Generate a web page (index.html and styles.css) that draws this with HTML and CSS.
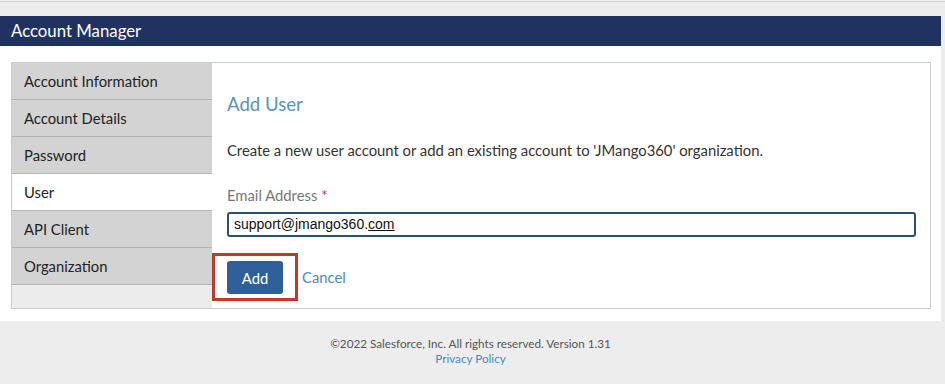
FILE: index.html
```html
<!DOCTYPE html>
<html lang="en">
<head>
    <meta charset="UTF-8">
    <title>Account Manager</title>
    <link rel="stylesheet" href="styles.css">
</head>
<body>
    <div class="top-line"></div>

    <div class="wrap">
        <div class="header">Account Manager</div>

        <div class="panel">
            <div class="box">
                <ul class="tabs">
                    <li>Account Information</li>
                    <li>Account Details</li>
                    <li>Password</li>
                    <li class="active">User</li>
                    <li>API Client</li>
                    <li>Organization</li>
                    <li class="filler"></li>
                </ul>

                <div class="content">
                    <h2>Add User</h2>
                    <p class="desc">Create a new user account or add an existing account to 'JMango360' organization.</p>

                    <label class="label">Email Address <span class="req">*</span></label>
                    <div class="field">support@jmango360.<span class="spell">com</span></div>

                    <div class="actions">
                        <span class="highlight">
                            <button class="btn">Add</button>
                        </span>
                        <a class="link" href="#">Cancel</a>
                    </div>
                </div>
            </div>
        </div>

        <div class="footer">
            <div>&copy;2022 Salesforce, Inc. All rights reserved. Version 1.31</div>
            <a class="link" href="#">Privacy Policy</a>
        </div>
    </div>
</body>
</html>
```

FILE: styles.css
```css
body {
    margin: 0;
    background-color: #ededed;
    font-family: Lato, "Open Sans", sans-serif;
    color: #222;
}

.top-line {
    height: 1px;
    border-bottom: 1px solid #cfcfcf;
    background-color: #f2f2f2;
}

.wrap {
    width: 941px;
    margin-top: 14px;
}

.header {
    height: 30px;
    line-height: 30px;
    background-color: #1f3260;
    color: #fff;
    font-size: 16.8px;
    padding-left: 11px;
}

.panel {
    background-color: #fff;
    padding: 16px 10px 12px 11px;
}

.box {
    display: flex;
    border: 1px solid #cccccc;
    height: 245px;
}

.tabs {
    list-style: none;
    margin: 0;
    padding: 0;
    width: 200px;
    display: flex;
    flex-direction: column;
}

.tabs li {
    height: 36px;
    line-height: 36px;
    padding-left: 12px;
    font-size: 14.8px;
    background-color: #d3d3d3;
    border-bottom: 1px solid #b3b3b3;
}

.tabs li.active {
    background-color: #fff;
}

.tabs li.filler {
    flex: 1;
    background-color: #ececec;
    border-bottom: none;
}

.content {
    flex: 1;
    padding-left: 15px;
    padding-right: 14px;
}

h2 {
    margin: 30px 0 0;
    font-size: 18.6px;
    line-height: 22px;
    font-weight: normal;
    color: #5a92bf;
}

.desc {
    margin: 25px 0 0;
    font-size: 14.8px;
    line-height: 20px;
    color: #333;
}

.label {
    display: block;
    margin-top: 25px;
    font-size: 14.8px;
    line-height: 20px;
    color: #777;
}

.req {
    color: #c23934;
}

.field {
    margin-top: 7px;
    height: 21px;
    line-height: 21px;
    border: 2px solid #2e4f74;
    border-radius: 3px;
    padding: 0 5px;
    font-family: "Liberation Sans", Arial, sans-serif;
    font-size: 14px;
    color: #111;
}

.spell {
    text-decoration: underline;
}

.actions {
    display: flex;
    align-items: center;
    margin-top: 16px;
}

.highlight {
    margin-left: -15px;
    border: 3px solid #c0392b;
    padding: 5px 12px 4px 12px;
    display: flex;
}

.btn {
    width: 56px;
    height: 33px;
    border: none;
    border-radius: 3px;
    background-color: #2f5f98;
    color: #fff;
    font-family: Lato, "Open Sans", sans-serif;
    font-size: 14.8px;
    cursor: pointer;
}

.link {
    color: #4a8bbd;
    text-decoration: none;
    font-size: 14.8px;
}

.actions .link {
    margin-left: 4px;
}

.footer {
    text-align: center;
    font-size: 11.7px;
    line-height: 15px;
    color: #555;
    padding-top: 15px;
}

.footer .link {
    font-size: 11.7px;
}
```
